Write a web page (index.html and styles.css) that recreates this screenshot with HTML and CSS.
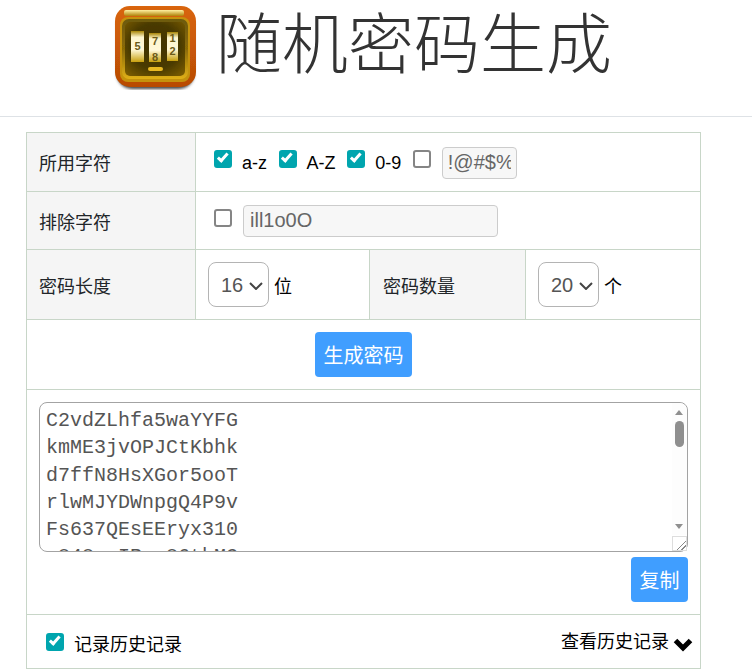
FILE: index.html
```html
<!DOCTYPE html>
<html lang="zh-CN">
<head>
  <meta charset="UTF-8">
  <title>随机密码生成</title>
  <link rel="stylesheet" href="styles.css">
</head>
<body>
<header class="page-head">
  <svg class="logo" width="88" height="90" viewBox="0 0 88 90">
    <defs>
      <linearGradient id="rim" x1="0" y1="0" x2="0" y2="1">
        <stop offset="0" stop-color="#d9650a"/>
        <stop offset="1" stop-color="#b84a05"/>
      </linearGradient>
      <radialGradient id="face" cx="0.5" cy="0.45" r="0.7">
        <stop offset="0" stop-color="#3f3200"/>
        <stop offset="0.6" stop-color="#4a3a00"/>
        <stop offset="1" stop-color="#7a5c04"/>
      </radialGradient>
      <linearGradient id="frame" x1="0" y1="0" x2="0" y2="1">
        <stop offset="0" stop-color="#6d5a0c"/>
        <stop offset="0.5" stop-color="#8a6a06"/>
        <stop offset="1" stop-color="#e0b018"/>
      </linearGradient>
      <linearGradient id="bar" x1="0" y1="0" x2="0" y2="1">
        <stop offset="0" stop-color="#fff0a0"/>
        <stop offset="1" stop-color="#b08208"/>
      </linearGradient>
      <linearGradient id="wheel" x1="0" y1="0" x2="0" y2="1">
        <stop offset="0" stop-color="#a88608"/>
        <stop offset="0.2" stop-color="#fdf6d0"/>
        <stop offset="0.6" stop-color="#fff8d8"/>
        <stop offset="1" stop-color="#c8a010"/>
      </linearGradient>
      <filter id="shadow"><feGaussianBlur stdDeviation="1.800"/></filter>
      <filter id="soft"><feGaussianBlur stdDeviation="0.400"/></filter>
    </defs>
    <rect x="5" y="11" width="77" height="78" rx="15" fill="#444" filter="url(#shadow)"/>
    <g filter="url(#soft)">
      <rect x="3" y="6" width="81" height="81" rx="15" fill="url(#rim)"/>
      <rect x="12" y="10" width="60" height="6" rx="2" fill="url(#bar)"/>
      <rect x="8" y="17" width="70" height="65" rx="8" fill="#c4920a"/>
      <rect x="10" y="19" width="66" height="60" rx="7" fill="url(#frame)"/>
      <rect x="13" y="22" width="60" height="54" rx="5" fill="url(#face)"/>
      <rect x="19" y="31" width="13" height="31" fill="url(#wheel)"/>
      <rect x="37" y="33" width="12" height="29" fill="url(#wheel)"/>
      <rect x="55" y="32" width="11" height="29" fill="url(#wheel)"/>
      <rect x="36" y="67" width="15" height="4" rx="2" fill="#e8b820"/>
    </g>
    <g class="logo-digits">
      <text x="25.500" y="50">5</text>
      <text x="43" y="45">7</text>
      <text x="43" y="61">8</text>
      <text x="60.500" y="42">1</text>
      <text x="60.500" y="55">2</text>
    </g>
  </svg>
  <h1>随机密码生成</h1>
</header>

<table class="form-table">
  <colgroup>
    <col class="col-a"><col class="col-b"><col class="col-c"><col class="col-d">
  </colgroup>
  <tr class="row-chars">
    <th>所用字符</th>
    <td colspan="3">
      <div class="opts">
        <input type="checkbox" checked><label>a-z</label>
        <input type="checkbox" checked><label>A-Z</label>
        <input type="checkbox" checked><label>0-9</label>
        <input type="checkbox">
        <input class="text-in symbols" type="text" value="!@#$%^&amp;*">
      </div>
    </td>
  </tr>
  <tr class="row-exclude">
    <th>排除字符</th>
    <td colspan="3">
      <div class="opts">
        <input type="checkbox">
        <input class="text-in exclude" type="text" value="ill1o0O">
      </div>
    </td>
  </tr>
  <tr class="row-size">
    <th>密码长度</th>
    <td class="size-cell"><select><option>16</option></select><span>位</span></td>
    <th class="th-count">密码数量</th>
    <td class="size-cell"><select><option>20</option></select><span>个</span></td>
  </tr>
  <tr class="row-gen">
    <td colspan="4" class="center"><button class="btn" type="button">生成密码</button></td>
  </tr>
  <tr class="row-out">
    <td colspan="4">
      <div class="output-wrap">
        <textarea class="output" readonly>C2vdZLhfa5waYYFG
kmME3jvOPJCtKbhk
d7ffN8HsXGor5ooT
rlwMJYDWnpgQ4P9v
Fs637QEsEEryx310
a848cvIRmx86tbMG
Tq2hVn7UeLw3ZpKd
y9BfRs4NcXj6AoGm
H5tWk2PuYe8DzQrL
v3MxJg7SbNa1CfEh
pU6dKq9TzWr4LyXo
G8nRf2HcVs5JmAtB
e7YwQk3PxDu6ZhNg
L4jTb9MaSo2FvRcX
z6EpHn8KyGq3WdUt
R1fXc7VmJs5BgLoA
w9NuT4ZeKh2PdYqC
M3gSa6QxFr8JtVbD
k5HzLo7WnEy4CpUm
B2vGj9RdXs6TfKqN</textarea>
        <div class="scroll">
          <span class="scroll-up"></span>
          <span class="scroll-thumb"></span>
          <span class="scroll-down"></span>
        </div>
      </div>
      <div class="copy-line"><button class="btn" type="button">复制</button></div>
    </td>
  </tr>
  <tr class="row-foot">
    <td colspan="4">
      <div class="foot">
        <div class="foot-left"><input type="checkbox" checked><label>记录历史记录</label></div>
        <div class="foot-right">
          <span>查看历史记录</span>
          <svg width="20" height="15" viewBox="0 0 20 15"><path d="M2.500 3.500 L10 11 L17.500 3.500" fill="none" stroke="#000" stroke-width="5"/></svg>
        </div>
      </div>
    </td>
  </tr>
</table>
</body>
</html>
```

FILE: styles.css
```css
html, body { margin: 0; padding: 0; background: #fff; }
body { font-family: "Liberation Sans", "Noto Sans CJK SC", sans-serif; font-size: 18px; color: #212529; overflow: hidden; height: 672px; }

.page-head { display: flex; justify-content: center; align-items: center; gap: 16px; height: 90px; padding: 0 28px 26px 0; border-bottom: 1px solid #dee2e6; }
.page-head h1 { margin: 0; font-size: 66px; font-weight: 300; color: #333; line-height: 90px; }
.logo { display: block; }
.logo-digits text { font-size: 11px; font-weight: bold; fill: #6b5a18; text-anchor: middle; font-family: "Liberation Sans", sans-serif; }

.form-table { border-collapse: collapse; table-layout: fixed; width: 675px; margin: 15px 0 0 26px; }
.form-table th, .form-table td { border: 1px solid #c8d6c8; padding: 0; }
.form-table th { background: #f5f5f5; font-weight: normal; text-align: left; padding-left: 12px; color: #212529; }
.form-table .th-count { padding-left: 13px; }
.col-a { width: 169px; }
.col-b { width: 174px; }
.col-c { width: 156px; }
.col-d { width: 175px; }

.row-chars { height: 59px; }
.row-exclude { height: 58px; }
.row-size { height: 70px; }
.row-gen { height: 70px; }
.row-out { height: 225px; }
.row-foot { height: 54px; }

input[type="checkbox"] { appearance: none; position: relative; box-sizing: border-box; width: 18px; height: 18px; margin: 0 0 5px 0; flex: none; background: #fff; border: 2px solid #858585; border-radius: 3px; }
input[type="checkbox"]:checked { background: #00a5ae; border-color: #00a5ae; }
input[type="checkbox"]:checked::after { content: ""; position: absolute; left: 3.500px; top: -1px; width: 5.500px; height: 10.500px; box-sizing: border-box; border: solid #fff; border-width: 0 3px 3px 0; transform: rotate(42deg); }

.opts { display: flex; align-items: center; padding-left: 18px; color: #000; }
.row-chars input[type="checkbox"] { margin-bottom: 7px; }
.opts label { margin: 0 11.600px 0 10px; padding-top: 2px; }
.text-in { box-sizing: border-box; height: 32px; padding: 0 5px; border: 1px solid #ccc; border-radius: 4px; background: #f7f7f7; color: #666; font-family: "Liberation Sans", sans-serif; font-size: 20px; margin-left: 11px; }
.symbols { width: 75px; margin-top: 1px; }
.form-table .exclude { width: 255px; padding: 0 6px; }

.size-cell { padding-left: 12px !important; color: #000; }
.size-cell select { appearance: none; box-sizing: border-box; width: 61px; height: 45px; border: 1px solid #b4b4b4; border-radius: 8px; color: #555; font-family: "Liberation Sans", sans-serif; font-size: 20px; padding: 0 0 0 12px; vertical-align: middle; background: #fff url("data:image/svg+xml,%3Csvg xmlns='http://www.w3.org/2000/svg' width='14' height='8'%3E%3Cpath d='M1 1l6 6 6-6' fill='none' stroke='%23444' stroke-width='2'/%3E%3C/svg%3E") no-repeat 40px 19px; }
.size-cell span { margin-left: 5px; vertical-align: middle; }

.center { text-align: center; }
.btn { height: 45px; padding: 0 8.500px; border: 0; border-radius: 4px; background: #409eff; color: #fff; font-family: "Liberation Sans", "Noto Sans CJK SC", sans-serif; font-size: 20px; }

.row-out td { padding: 12px; vertical-align: top; }
.output-wrap { position: relative; width: 649px; height: 150px; }
.output { display: block; box-sizing: border-box; width: 649px; height: 150px; border: 1px solid #a3a3a3; border-radius: 8px; padding: 4px 6px; margin: 0; font-family: "Liberation Mono", monospace; font-size: 20px; line-height: 27.300px; color: #555; resize: both; outline: none; overflow: hidden; }
.output::-webkit-resizer { background: linear-gradient(135deg, #fff 62%, #888 62%, #888 67%, #fff 67%, #fff 80%, #888 80%, #888 85%, #fff 85%); border: 1px solid #ddd; }
.scroll { position: absolute; right: 1px; top: 1px; bottom: 17px; width: 15px; background: #fdfdfd; border-top-right-radius: 8px; }
.scroll-up, .scroll-down { position: absolute; left: 3px; width: 0; height: 0; border-left: 4.500px solid transparent; border-right: 4.500px solid transparent; }
.scroll-up { top: 7px; border-bottom: 5px solid #8f8f8f; }
.scroll-down { bottom: 6px; border-top: 5px solid #8f8f8f; }
.scroll-thumb { position: absolute; left: 3px; top: 18px; width: 9px; height: 26px; border-radius: 5px; background: #8f8f8f; }
.copy-line { display: flex; justify-content: flex-end; margin-top: 5px; }

.foot { display: flex; justify-content: space-between; align-items: center; padding: 0 7px 0 19px; color: #000; }
.foot-left { display: flex; align-items: center; }
.foot-left input[type="checkbox"] { margin: 0; }
.foot-left label { margin-left: 10px; padding-top: 3px; }
.foot-right { display: flex; align-items: center; gap: 4px; }
.foot-right span { margin-bottom: 4px; }
.foot-right svg { margin-top: 5px; }
```
